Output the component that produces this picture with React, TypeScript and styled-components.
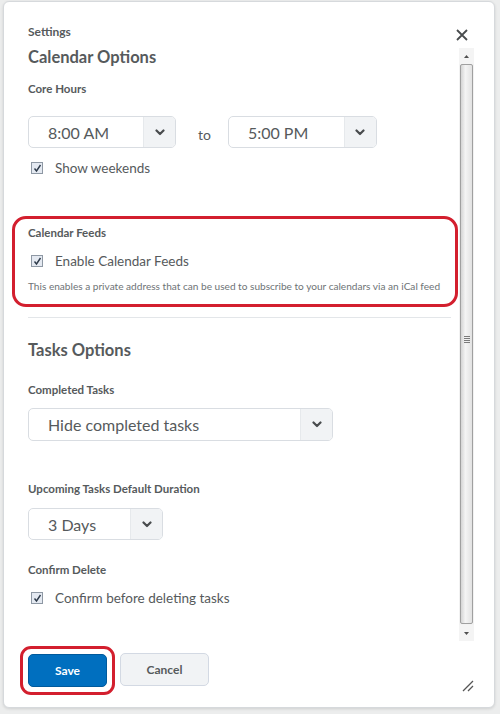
import React from "react";
import styled, { createGlobalStyle } from "styled-components";

const Global = createGlobalStyle`
  html, body { margin: 0; padding: 0; }
  body {
    background: #eceded;
    font-family: Lato, "Open Sans", "Liberation Sans", sans-serif;
    color: #565a5c;
  }
  #root { width: 500px; height: 714px; overflow: hidden; }
`;

const Dialog = styled.div`
  margin: 1px 0 0 3px;
  width: 492px;
  height: 707px;
  box-sizing: border-box;
  background: #fff;
  border: 1px solid #d6d9dc;
  border-radius: 6px;
  box-shadow: 0 1px 3px rgba(0, 0, 0, 0.12);
  display: grid;
  grid-template-rows: 43px 596px 1fr;
  overflow: hidden;
`;

const Header = styled.div`
  display: flex;
  justify-content: space-between;
  align-items: flex-start;
  padding: 22px 24px 0 24px;
`;

const Title = styled.div`
  font-size: 12px;
  font-weight: 700;
  line-height: 16px;
  color: #565a5c;
`;

const CloseBtn = styled.button`
  border: 0;
  background: none;
  padding: 0;
  margin-top: 5px;
  width: 14px;
  height: 14px;
  display: flex;
  color: #494c4e;
`;

const Body = styled.div`
  display: flex;
`;

const Content = styled.div`
  flex: 1;
  padding: 0 8px 0 24px;
  display: flex;
  flex-direction: column;
  align-items: flex-start;
`;

const Heading = styled.h2<{ $mt: number }>`
  margin: ${(p) => p.$mt}px 0 0 0;
  font-size: 16.5px;
  line-height: 20px;
  font-weight: 700;
  color: #565a5c;
`;

const Label = styled.div<{ $mt: number }>`
  margin-top: ${(p) => p.$mt}px;
  font-size: 11.5px;
  line-height: 16px;
  font-weight: 700;
  color: #565a5c;
`;

const Row = styled.div<{ $mt: number }>`
  margin-top: ${(p) => p.$mt}px;
  display: flex;
  align-items: center;
`;

const To = styled.span`
  font-size: 14px;
  padding: 4px 17px 0 22px;
  color: #565a5c;
`;

const SelectBox = styled.div<{ $w: number; $h: number }>`
  width: ${(p) => p.$w}px;
  height: ${(p) => p.$h}px;
  box-sizing: border-box;
  border: 1px solid #d9dde2;
  border-radius: 5px;
  display: flex;
  overflow: hidden;
  background: #fff;
`;

const SelectValue = styled.div`
  flex: 1;
  display: flex;
  align-items: center;
  padding-left: 19px;
  font-size: 16px;
  color: #565a5c;
`;

const SelectArrow = styled.div`
  width: 31px;
  background: #f1f3f5;
  border-left: 1px solid #e6e9ec;
  display: flex;
  align-items: center;
  justify-content: center;
  color: #494c4e;
`;

const CheckRow = styled.label<{ $mt: number }>`
  margin-top: ${(p) => p.$mt}px;
  display: flex;
  align-items: center;
  gap: 12px;
  padding-left: 3px;
  font-size: 13.5px;
  line-height: 20px;
  color: #565a5c;
`;

const Box = styled.span`
  width: 12px;
  height: 12px;
  box-sizing: border-box;
  border: 1px solid #8e98a4;
  background: #e4e9f1;
  display: flex;
  align-items: center;
  justify-content: center;
`;

const Help = styled.div`
  margin-top: 8px;
  font-size: 10.1px;
  line-height: 14px;
  color: #6e7376;
  white-space: nowrap;
`;

const Highlight = styled.div`
  margin: 38px -7px 0 -16px;
  align-self: stretch;
  border: 3px solid #d31f2e;
  border-radius: 14px;
  padding: 6px 10px 11px 13px;
  display: flex;
  flex-direction: column;
  align-items: flex-start;
`;

const Divider = styled.hr`
  align-self: stretch;
  margin: 10px 0 0 0;
  border: 0;
  border-top: 1px solid #e3e6e9;
`;

const Scrollbar = styled.div`
  width: 15px;
  margin: 3px 20px 0 0;
  display: flex;
  flex-direction: column;
  background: #f2f2f2;
`;

const ScrollBtn = styled.div`
  height: 16px;
  display: flex;
  align-items: center;
  justify-content: center;
  background: #f4f4f4;
  color: #505050;
`;

const Thumb = styled.div`
  flex: 1;
  margin: 0 1px 1px 1px;
  border: 1px solid #a0a0a0;
  border-radius: 2px;
  background: linear-gradient(to right, #d4d4d4, #f4f4f4 40%, #e2e2e2);
  display: flex;
  align-items: center;
  justify-content: center;
`;

const Grip = styled.div`
  width: 6px;
  height: 7px;
  background: repeating-linear-gradient(to bottom, #7a7a7a 0 1px, transparent 1px 2px);
  margin-bottom: 10px;
`;

const Footer = styled.div`
  display: flex;
  align-items: flex-start;
  gap: 5px;
  padding: 5px 20px 0 16px;
`;

const SaveRing = styled.div`
  border: 3px solid #d31f2e;
  border-radius: 11px;
  padding: 5px;
  display: flex;
`;

const Button = styled.button<{ $primary?: boolean; $w: number }>`
  width: ${(p) => p.$w}px;
  height: 33px;
  margin-top: ${(p) => (p.$primary ? 0 : 7)}px;
  border-radius: 5px;
  font-family: Lato, "Liberation Sans", sans-serif;
  font-size: 12px;
  font-weight: 700;
  cursor: pointer;
  background: ${(p) => (p.$primary ? "#006fbf" : "#f1f3f5")};
  color: ${(p) => (p.$primary ? "#fff" : "#565a5c")};
  border: 1px solid ${(p) => (p.$primary ? "#005a9c" : "#d3d9e3")};
`;

const Resize = styled.div`
  margin-left: auto;
  margin-top: 34px;
  width: 12px;
  height: 12px;
  display: flex;
`;

const Chevron = () => (
  <svg width="10" height="7" viewBox="0 0 10 7">
    <path d="M1.5 1.5 L5 5 L8.5 1.5" fill="none" stroke="currentColor" strokeWidth="2.2" strokeLinecap="round" strokeLinejoin="round" />
  </svg>
);

const Check = () => (
  <svg width="9" height="9" viewBox="0 0 9 9">
    <path d="M1.5 4.5 L3.5 7 L7.5 1" fill="none" stroke="#2e3b4a" strokeWidth="1.4" />
  </svg>
);

const Select = ({ w, h, value }: { w: number; h: number; value: string }) => (
  <SelectBox $w={w} $h={h}>
    <SelectValue>{value}</SelectValue>
    <SelectArrow>
      <Chevron />
    </SelectArrow>
  </SelectBox>
);

const Checkbox = ({ label, mt }: { label: string; mt: number }) => (
  <CheckRow $mt={mt}>
    <Box>
      <Check />
    </Box>
    {label}
  </CheckRow>
);

export default function App() {
  return (
    <>
      <Global />
      <Dialog>
        <Header>
          <Title>Settings</Title>
          <CloseBtn aria-label="Close">
            <svg width="12" height="12" viewBox="0 0 12 12">
              <path d="M1 1 L11 11 M11 1 L1 11" stroke="currentColor" strokeWidth="1.8" />
            </svg>
          </CloseBtn>
        </Header>
        <Body>
          <Content>
            <Heading $mt={2}>Calendar Options</Heading>
            <Label $mt={14}>Core Hours</Label>
            <Row $mt={19}>
              <Select w={148} h={32} value="8:00 AM" />
              <To>to</To>
              <Select w={149} h={32} value="5:00 PM" />
            </Row>
            <Checkbox mt={10} label="Show weekends" />
            <Highlight>
              <Label $mt={0}>Calendar Feeds</Label>
              <Checkbox mt={10} label="Enable Calendar Feeds" />
              <Help>This enables a private address that can be used to subscribe to your calendars via an iCal feed</Help>
            </Highlight>
            <Divider />
            <Heading $mt={22}>Tasks Options</Heading>
            <Label $mt={22}>Completed Tasks</Label>
            <Row $mt={10}>
              <Select w={305} h={33} value="Hide completed tasks" />
            </Row>
            <Label $mt={40}>Upcoming Tasks Default Duration</Label>
            <Row $mt={11}>
              <Select w={135} h={32} value="3 Days" />
            </Row>
            <Label $mt={22}>Confirm Delete</Label>
            <Checkbox mt={10} label="Confirm before deleting tasks" />
          </Content>
          <Scrollbar>
            <ScrollBtn>
              <svg width="5" height="3" viewBox="0 0 5 3"><path d="M0 3 L2.5 0 L5 3 Z" fill="currentColor" /></svg>
            </ScrollBtn>
            <Thumb>
              <Grip />
            </Thumb>
            <ScrollBtn>
              <svg width="5" height="3" viewBox="0 0 5 3"><path d="M0 0 L2.5 3 L5 0 Z" fill="currentColor" /></svg>
            </ScrollBtn>
          </Scrollbar>
        </Body>
        <Footer>
          <SaveRing>
            <Button $primary $w={79}>Save</Button>
          </SaveRing>
          <Button $w={89}>Cancel</Button>
          <Resize>
            <svg width="12" height="12" viewBox="0 0 12 12">
              <path d="M1 11 L11 1 M6 11 L11 6" stroke="#555" strokeWidth="1.3" />
            </svg>
          </Resize>
        </Footer>
      </Dialog>
    </>
  );
}
